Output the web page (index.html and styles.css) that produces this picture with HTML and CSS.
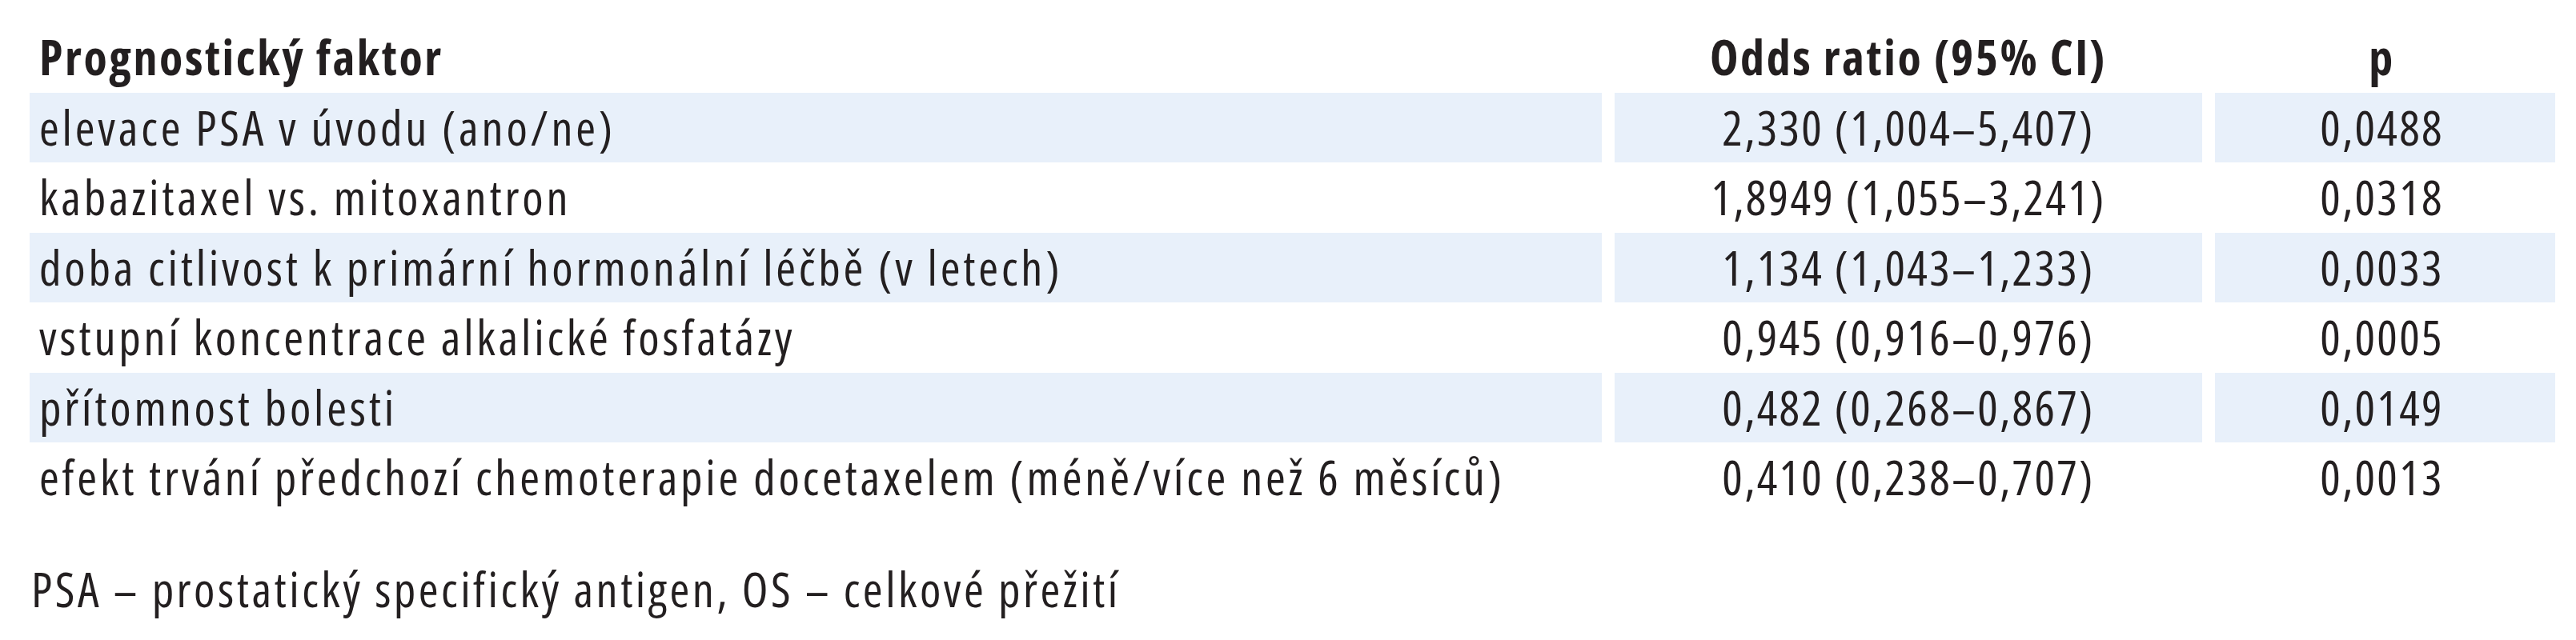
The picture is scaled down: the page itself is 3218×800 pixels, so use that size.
FILE: index.html
```html
<!DOCTYPE html>
<html lang="cs">
<head>
<meta charset="utf-8">
<title>Prognostické faktory</title>
<link rel="stylesheet" href="styles.css">
</head>
<body>
<main class="page">
  <table class="results">
    <colgroup>
      <col class="c-factor">
      <col class="c-odds">
      <col class="c-p">
    </colgroup>
    <thead>
      <tr>
        <th class="factor">Prognostický faktor</th>
        <th class="odds">Odds ratio (95% CI)</th>
        <th class="pval">p</th>
      </tr>
    </thead>
    <tbody>
      <tr class="shaded">
        <td class="factor">elevace PSA v úvodu (ano/ne)</td>
        <td class="odds">2,330 (1,004–5,407)</td>
        <td class="pval">0,0488</td>
      </tr>
      <tr>
        <td class="factor">kabazitaxel vs. mitoxantron</td>
        <td class="odds">1,8949 (1,055–3,241)</td>
        <td class="pval">0,0318</td>
      </tr>
      <tr class="shaded">
        <td class="factor">doba citlivost k primární hormonální léčbě (v letech)</td>
        <td class="odds">1,134 (1,043–1,233)</td>
        <td class="pval">0,0033</td>
      </tr>
      <tr>
        <td class="factor">vstupní koncentrace alkalické fosfatázy</td>
        <td class="odds">0,945 (0,916–0,976)</td>
        <td class="pval">0,0005</td>
      </tr>
      <tr class="shaded">
        <td class="factor">přítomnost bolesti</td>
        <td class="odds">0,482 (0,268–0,867)</td>
        <td class="pval">0,0149</td>
      </tr>
      <tr>
        <td class="factor">efekt trvání předchozí chemoterapie docetaxelem (méně/více než 6 měsíců)</td>
        <td class="odds">0,410 (0,238–0,707)</td>
        <td class="pval">0,0013</td>
      </tr>
    </tbody>
  </table>
  <p class="note">PSA – prostatický specifický antigen, OS – celkové přežití</p>
</main>
</body>
</html>
```
FILE: styles.css
```css
html, body {
  margin: 0;
  padding: 0;
  background: #ffffff;
}

.page {
  padding: 28px 0 0 21px;
  font-family: "Open Sans", "Noto Sans", sans-serif;
  font-stretch: 75%;
  font-size: 60px;
  letter-spacing: 3.8px;
  color: #231f20;
}

.results {
  border-collapse: separate;
  border-spacing: 16px 0;
  table-layout: fixed;
  width: 3187px;
}

.c-factor { width: 1964px; }
.c-odds { width: 734px; }
.c-p { width: 425px; }

.results th,
.results td {
  height: 87.5px;
  padding: 0;
  line-height: 87.5px;
  white-space: nowrap;
  vertical-align: middle;
}

.results th {
  font-weight: 700;
  letter-spacing: 2.6px;
}

.results .factor {
  text-align: left;
  padding-left: 12px;
}

.results .odds {
  text-align: center;
}

.results .pval {
  text-align: center;
  padding-right: 8px;
}

.results td.odds,
.results td.pval {
  letter-spacing: 2.3px;
}

.results tr.shaded td {
  background: #e8f0fa;
}

.note {
  margin: 52px 0 0 18px;
  line-height: 87.5px;
  letter-spacing: 3.5px;
}
```
